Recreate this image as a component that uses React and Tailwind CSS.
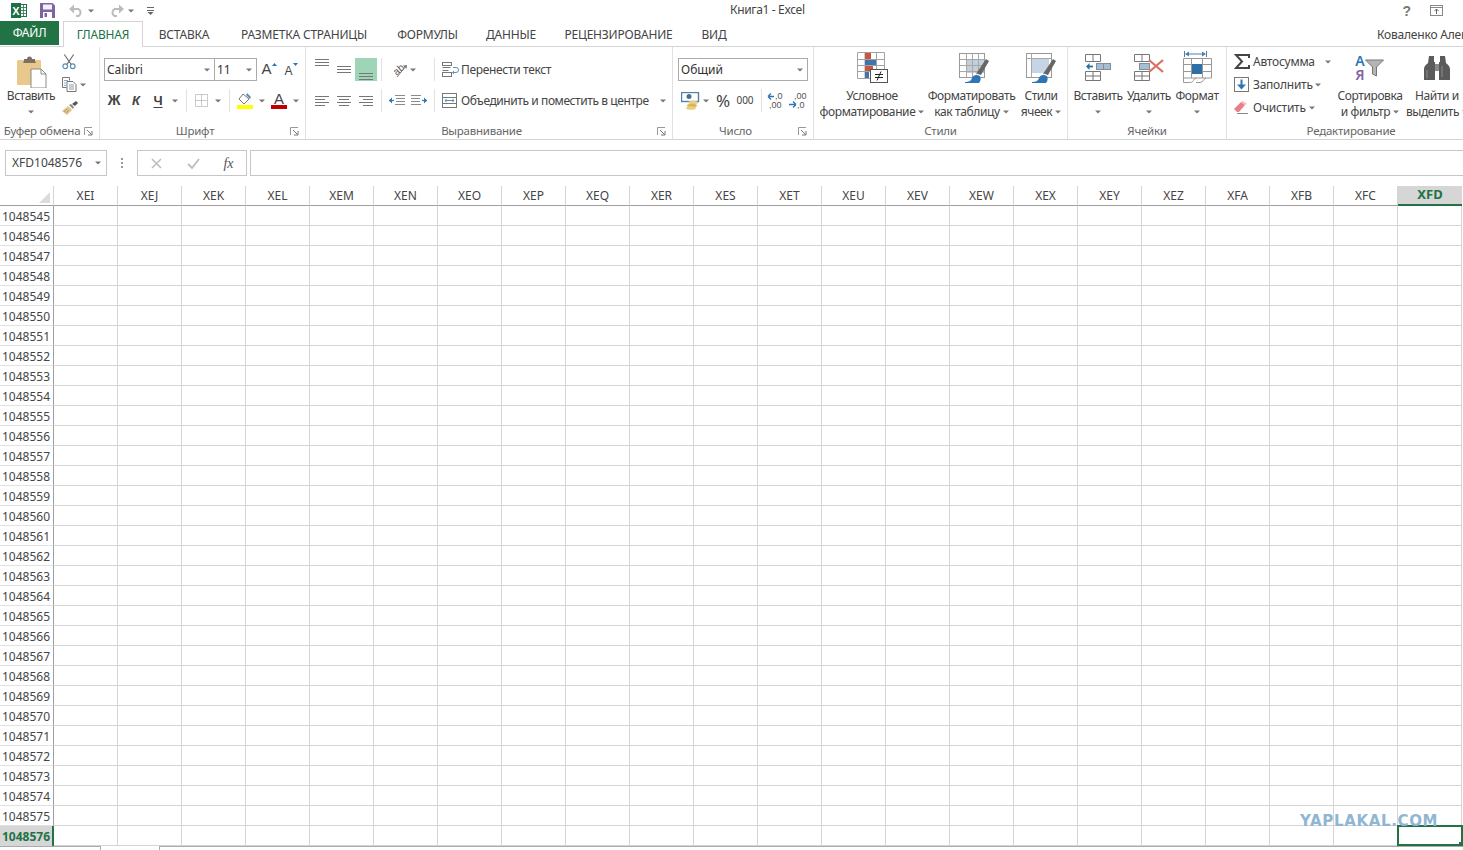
import React from 'react';

const COLS = ['XEI','XEJ','XEK','XEL','XEM','XEN','XEO','XEP','XEQ','XER','XES','XET','XEU','XEV','XEW','XEX','XEY','XEZ','XFA','XFB','XFC','XFD'];
const ROWS = Array.from({ length: 32 }, (_, i) => 1048545 + i);

const TABS = [
	{ label: 'ГЛАВНАЯ', cls: 'w-[80px] h-[26px] text-[#217346] bg-white border border-b-0 border-[#d4d4d4]' },
	{ label: 'ВСТАВКА', cls: 'w-[82px]' },
	{ label: 'РАЗМЕТКА СТРАНИЦЫ', cls: 'w-[158px]' },
	{ label: 'ФОРМУЛЫ', cls: 'w-[89px]' },
	{ label: 'ДАННЫЕ', cls: 'w-[78px]' },
	{ label: 'РЕЦЕНЗИРОВАНИЕ', cls: 'w-[137px]' },
	{ label: 'ВИД', cls: 'w-[54px]' },
];

const Caret = ({ className = '' }) => (
	<svg width="6" height="4" viewBox="0 0 6 4" className={className}>
		<path d="M0 0.5h6L3 3.5z" fill="#777" />
	</svg>
);

const Launcher = () => (
	<span className="w-[15px] flex justify-start">
		<svg width="9" height="9" viewBox="0 0 9 9">
			<path d="M.5 8V.5H8" fill="none" stroke="#999" />
			<path d="M3 3l4.5 4.5M4 8h4V4" fill="none" stroke="#777" />
		</svg>
	</span>
);

const Sep = ({ className = '' }) => <span className={'w-px h-[23px] bg-[#e1e1e1] ' + className} />;

const Tool = ({ w = 'w-[22px]', children, className = '' }) => (
	<span className={w + ' h-[23px] flex items-center justify-center shrink-0 ' + className}>{children}</span>
);

const CaretTool = ({ w = 'w-[12px]' }) => (
	<span className={w + ' h-[23px] flex items-center justify-center shrink-0'}><Caret /></span>
);

const Group = ({ w, label, launcher, border = true, children }) => (
	<div className={w + ' h-[92px] shrink-0 flex flex-col ' + (border ? 'border-r border-[#e1e1e1]' : '')}>
		<div className="h-[77px]">{children}</div>
		<div className="h-[14px] flex items-center text-[11.5px] tracking-[-0.25px] text-[#666]">
			<span className="flex-1 text-center whitespace-nowrap">{label}</span>
			{launcher && <Launcher />}
		</div>
	</div>
);

const BigBtn = ({ w, icon, lines, caretLine }) => (
	<div className={w + ' flex flex-col items-center shrink-0'}>
		<div className="h-[41px] flex items-center justify-center">{icon}</div>
		<div className="text-[12px] leading-[16px] tracking-[-0.4px] text-[#444] text-center whitespace-nowrap">
			<div>{lines[0]}</div>
			{caretLine ? (
				<div className="flex items-center justify-center gap-[3px]">{lines[1]}<Caret /></div>
			) : (
				<div className="h-[16px] flex items-center justify-center"><Caret /></div>
			)}
		</div>
	</div>
);

const Select = ({ w, text }) => (
	<div className={w + ' h-[23px] shrink-0 border border-[#ababab] flex items-center justify-between pl-[2px] pr-[4px] text-[12px] text-[#333]'}>
		<span>{text}</span>
		<Caret />
	</div>
);

const AlignLines = ({ rows }) => (
	<svg width="16" height="14" viewBox="0 0 16 14">
		{rows.map(([x1, x2, y], i) => <path key={i} d={`M${x1} ${y}.5H${x2}`} stroke="#777" />)}
	</svg>
);

const ExcelLogo = () => (
	<svg width="16" height="15" viewBox="0 0 16 15">
		<rect x="9.500" y="1.500" width="6" height="12" fill="#fff" stroke="#217346" />
		<path d="M12.500 1.500v12M9.500 4.500h6M9.500 7.500h6M9.500 10.500h6" stroke="#217346" strokeWidth=".8" />
		<rect x="0" y="0" width="10" height="15" fill="#1e7145" />
		<text x="5" y="12" textAnchor="middle" fontSize="11" fontWeight="700" fill="#fff" fontFamily="Liberation Sans">X</text>
	</svg>
);

const SaveIcon = () => (
	<svg width="15" height="15" viewBox="0 0 15 15">
		<path d="M0 0h12.500L15 2.500V15H0z" fill="#8064a2" />
		<rect x="3" y="1.500" width="9" height="5" fill="#f3eff7" />
		<rect x="3" y="9" width="9" height="6" fill="#fff" />
		<rect x="4.500" y="10" width="2.500" height="4" fill="#8064a2" />
	</svg>
);

const UndoIcon = ({ flip }) => (
	<svg width="15" height="13" viewBox="0 0 15 13" className={flip ? '-scale-x-100' : ''}>
		<path d="M3 5h6.500a4 4 0 0 1 0 7H7" fill="none" stroke="#bcbcbc" strokeWidth="2" />
		<path d="M0 5l5-4.500v9z" fill="#bcbcbc" />
	</svg>
);

const QatMore = () => (
	<svg width="7" height="8" viewBox="0 0 7 8">
		<path d="M0 .5h7M0 3.500h7" stroke="#666" />
		<path d="M.5 5h6L3.500 8z" fill="#666" />
	</svg>
);

const HelpIcon = () => <span className="text-[14px] font-bold text-[#777] leading-none font-['Liberation_Sans',sans-serif]">?</span>;

const RibbonDisplay = () => (
	<svg width="13" height="11" viewBox="0 0 13 11">
		<rect x=".5" y=".5" width="12" height="10" fill="none" stroke="#888" />
		<path d="M1 2.500h11" stroke="#888" />
		<path d="M6.500 9V4M4.500 6l2-2 2 2" fill="none" stroke="#666" />
	</svg>
);

const PasteIcon = () => (
	<svg width="30" height="32" viewBox="0 0 30 32">
		<rect x="0" y="4" width="24" height="25" rx="1" fill="#e8c88c" />
		<path d="M7 5V3h3a2.500 2.500 0 0 1 5 0h3v2l1 2H6z" fill="#7d6f63" />
		<path d="M14 13h10l5 5v14H14z" fill="#fff" stroke="#8a8a8a" />
		<path d="M24 13v5h5" fill="none" stroke="#8a8a8a" />
	</svg>
);

const ScissorsIcon = () => (
	<svg width="15" height="16" viewBox="0 0 15 16">
		<path d="M2.500 0l7.500 11M12.500 0L5 11" stroke="#666" strokeWidth="1.200" fill="none" />
		<circle cx="3.500" cy="12.500" r="2.500" fill="none" stroke="#5f8fb4" strokeWidth="1.300" />
		<circle cx="11.500" cy="12.500" r="2.500" fill="none" stroke="#5f8fb4" strokeWidth="1.300" />
	</svg>
);

const CopyIcon = () => (
	<svg width="15" height="15" viewBox="0 0 15 15">
		<path d="M.5.5h7v3M.5.500v10h4" fill="none" stroke="#777" />
		<path d="M2 3.500h4M2 6h2M2 8.500h2" stroke="#8aa9c2" />
		<path d="M5 4.500h6l3 3v7H5z" fill="#fff" stroke="#777" />
		<path d="M7 8h5M7 10h5M7 12h5" stroke="#9a9a9a" />
	</svg>
);

const PainterIcon = () => (
	<svg width="16" height="14" viewBox="0 0 16 14">
		<path d="M0 10l6-5 4 4-5 5z" fill="#e0c58f" />
		<path d="M2 11l3-3M4 12l3-3" stroke="#b59a64" />
		<path d="M7 4l2-1 3 3-1 2z" fill="#8a8a8a" />
		<path d="M10 3l4-3 2 2-3 3z" fill="#555" />
	</svg>
);

const BordersIcon = () => (
	<svg width="13" height="13" viewBox="0 0 13 13">
		<path d="M.5.5h12v12H.5zM6.500.5v12M.5 6.500h12" fill="none" stroke="#999" strokeDasharray="1 1" />
	</svg>
);

const FillIcon = () => (
	<svg width="16" height="17" viewBox="0 0 16 17">
		<path d="M6 2l6 5-5 5-5-5z" fill="#fff" stroke="#777" />
		<path d="M10 1l4 4-1 2-4-4z" fill="#5f8fb4" />
		<rect x="0" y="13" width="16" height="4" fill="#ffff00" />
	</svg>
);

const ColorIcon = () => (
	<div className="flex flex-col items-center w-[16px]">
		<span className="text-[15px] leading-[13px] font-['Liberation_Sans',sans-serif] text-[#444]">A</span>
		<span className="w-[16px] h-[4px] bg-[#c00000]" />
	</div>
);

const WrapIcon = () => (
	<svg width="17" height="15" viewBox="0 0 17 15">
		<rect x=".5" y=".5" width="9" height="3" fill="none" stroke="#777" />
		<path d="M.5 5.500h8M.5 8.500h6" stroke="#777" />
		<rect x=".5" y="10.500" width="9" height="4" fill="none" stroke="#777" />
		<path d="M11 5.500h3a2 2 0 0 1 0 5h-3" fill="none" stroke="#5f8fb4" />
		<path d="M10 10.500l2-2v4z" fill="#5f8fb4" />
	</svg>
);

const MergeIcon = () => (
	<svg width="15" height="15" viewBox="0 0 15 15">
		<rect x=".5" y=".5" width="14" height="14" fill="none" stroke="#777" />
		<path d="M.5 4.500h14M.5 10.500h14" stroke="#777" />
		<path d="M3 7.500h9" stroke="#5f8fb4" />
		<path d="M2.500 7.500l2-2v4zM12.500 7.500l-2-2v4z" fill="#5f8fb4" />
	</svg>
);

const OrientIcon = () => (
	<svg width="18" height="16" viewBox="0 0 18 16" className="overflow-visible">
		<text x="2" y="12" fontSize="10" fill="#555" transform="rotate(-40 6 8)" fontFamily="Liberation Sans">ab</text>
		<path d="M6 15L15 4" stroke="#777" />
		<path d="M16 3l-4 .5 3.500 3.500z" fill="#777" />
	</svg>
);

const IndentIcon = ({ rev }) => (
	<svg width="16" height="11" viewBox="0 0 16 11" className={rev ? '-scale-x-100' : ''}>
		<path d="M6 .5h10M7 3.500h9M7 6.500h9M6 9.500h10" stroke="#8a8a8a" />
		<path d="M0 5.500h5" stroke="#2e75b6" strokeWidth="1.200" />
		<path d="M0 5.500l3-3v6z" fill="#2e75b6" />
	</svg>
);

const CurrencyIcon = () => (
	<svg width="19" height="18" viewBox="0 0 19 18">
		<rect x=".5" y=".5" width="17" height="9" fill="#fff" stroke="#4f81a8" strokeWidth="1.400" />
		<circle cx="8" cy="4.500" r="2.500" fill="#4f6f8c" />
		<ellipse cx="12" cy="10.500" rx="5" ry="1.800" fill="#e6cf84" />
		<ellipse cx="11" cy="13.500" rx="5" ry="1.800" fill="#d8b64e" />
		<ellipse cx="10" cy="16" rx="5" ry="1.800" fill="#e6cf84" />
	</svg>
);

const DecimalIcon = ({ more }) => (
	<svg width="17" height="17" viewBox="0 0 17 17" className="overflow-visible">
		<text x={more ? 8 : 5} y="7" fontSize="9" fill="#555" fontFamily="Liberation Sans">{more ? ',0' : ',00'}</text>
		<text x={more ? 2 : 8} y="16" fontSize="9" fill="#555" fontFamily="Liberation Sans">{more ? ',00' : ',0'}</text>
		<path d={more ? 'M1 4.500h6M1 4.500l3-3M1 4.500l3 3' : 'M0 12.500h7M7 12.500l-3-3M7 12.500l-3 3'} fill="none" stroke="#2e75b6" strokeWidth="1.300" />
	</svg>
);

const CondIcon = () => (
	<svg width="31" height="31" viewBox="0 0 31 31">
		<path d="M.5 .5h27v26H.5zM.5 7.500h27M.5 13.500h27M.5 19.500h27M8 .5v26M19.500.5v26" fill="none" stroke="#a3a3a3" />
		<rect x="8" y="1" width="6" height="6" fill="#c8573e" />
		<rect x="8" y="8" width="11" height="5" fill="#3f74ad" />
		<rect x="8" y="14" width="8" height="5" fill="#c8573e" />
		<rect x="8" y="20" width="4" height="6" fill="#3f74ad" />
		<rect x="13.500" y="17.500" width="17" height="13" fill="#fff" stroke="#555" />
		<path d="M18 22.500h8M18 25.500h8M24 19.500l-4 9" stroke="#222" />
	</svg>
);

const BrushOverlay = () => (
	<>
		<path d="M6 29c4 0 6-1 7-4s5-4 8-2c1 2 1 5-1 7H6z" fill="#2e75b6" />
		<path d="M17 21L27 6l3 2-8 14z" fill="#666" />
		<path d="M18 21l4 2" stroke="#fff" />
	</>
);

const TableIcon = () => (
	<svg width="31" height="30" viewBox="0 0 31 30">
		<rect x=".5" y=".5" width="25" height="24" fill="#fff" stroke="#999" />
		<rect x="7" y="6" width="18" height="14" fill="#c3ced9" />
		<path d="M.5 6.500h25M.5 12.500h25M.5 18.500h25M7.500.5v24M13.500.5v24M19.500.5v24" fill="none" stroke="#a8a8a8" />
		<BrushOverlay />
	</svg>
);

const StylesIcon = () => (
	<svg width="31" height="30" viewBox="0 0 31 30">
		<rect x=".5" y=".5" width="25" height="24" fill="#fff" stroke="#999" />
		<rect x="5" y="5" width="18" height="15" fill="#c5d5e6" />
		<path d="M.5 5.500h25M5.500.5v24" fill="none" stroke="#a8a8a8" />
		<BrushOverlay />
	</svg>
);

const InsertCellIcon = () => (
	<svg width="26" height="27" viewBox="0 0 26 27">
		<path d="M.5 .5h15v7H.5zM8 .5v7" fill="none" stroke="#777" />
		<rect x="11.500" y="9.500" width="14" height="6" fill="#a9bdd0" stroke="#7f8f9f" />
		<path d="M18.500 9.500v6" stroke="#7f8f9f" />
		<path d="M3 12.500h5" stroke="#2e6f9e" strokeWidth="1.800" />
		<path d="M1 12.500l3.500-3.500v7z" fill="#2e6f9e" />
		<path d="M.5 17.500h15v9H.5zM8 17.500v9M.5 22h15" fill="none" stroke="#777" />
	</svg>
);

const DeleteCellIcon = () => (
	<svg width="30" height="27" viewBox="0 0 30 27">
		<path d="M.5 .5h15v7H.5zM8 .5v7" fill="none" stroke="#777" />
		<rect x="5.500" y="9.500" width="10" height="6" fill="#a9bdd0" stroke="#7f8f9f" />
		<path d="M.5 17.500h15v9H.5zM8 17.500v9M.5 22h15" fill="none" stroke="#777" />
		<path d="M15 6l14 12M29 6L15 18" stroke="#d9705f" strokeWidth="2.200" />
	</svg>
);

const FormatCellIcon = () => (
	<svg width="29" height="33" viewBox="0 0 29 33">
		<path d="M1.500 0v6M23.500 0v6M3 3h19" fill="none" stroke="#4f81a8" />
		<path d="M2 3l4-2.500v5zM23 3l-4-2.500v5z" fill="#4f81a8" />
		<path d="M.5 7.500h28V27H.5zM.5 13.500h28M.5 20.500h28M8.500 7.500V27M19.500 7.500V27" fill="none" stroke="#999" />
		<path d="M.5 27v4.500h7c3 0 3-4 6-4.500M13 31.500h4c3 0 3-3 6-4.500" fill="none" stroke="#999" />
		<rect x="9" y="13" width="10" height="10" fill="#2e6fa8" />
	</svg>
);

const SumIcon = () => (
	<svg width="16" height="15" viewBox="0 0 16 15">
		<path d="M15 4V1H2l6 6.500L2 14h13v-3" fill="none" stroke="#444" strokeWidth="2" />
	</svg>
);

const FillDown = () => (
	<svg width="15" height="15" viewBox="0 0 15 15">
		<rect x=".5" y=".5" width="14" height="14" fill="#fff" stroke="#777" />
		<path d="M7.500 2.500V8" stroke="#2e75b6" strokeWidth="2" />
		<path d="M3 7.500h9L7.500 12.500z" fill="#2e75b6" />
	</svg>
);

const Eraser = () => (
	<svg width="15" height="13" viewBox="0 0 15 13">
		<path d="M0 8l7-7 4 3-6 7H3z" fill="#e8808c" />
		<path d="M7 1l1.500-1L13 3l-2 1z" fill="#f4b6bd" />
		<path d="M3 12.500h11" stroke="#888" />
	</svg>
);

const SortIcon = () => (
	<div className="flex items-center h-[34px] -ml-px">
		<div className="flex flex-col items-center gap-px text-[14px] leading-[13px] font-semibold font-['Noto_Sans',sans-serif]">
			<span className="text-[#2e75b6]">А</span>
			<span className="text-[#8064a2]">Я</span>
		</div>
		<svg width="19" height="18" viewBox="0 0 19 18">
			<path d="M.5 1h18l-7 7v9l-4-2V8z" fill="#b5b5b5" stroke="#777" />
		</svg>
	</div>
);

const Binoculars = () => (
	<svg width="26" height="24" viewBox="0 0 26 24">
		<path d="M5 0h5v6h1v18H0V13c0-3 3-5 4-6z" fill="#5b5b5b" />
		<path d="M21 0h-5v6h-1v18h11V13c0-3-3-5-4-6z" fill="#5b5b5b" />
		<rect x="11" y="8" width="4" height="7" fill="#8a8a8a" />
		<path d="M3 14v8M18 10v11" stroke="#8d8d8d" />
	</svg>
);

const Ribbon = () => (
	<div className="h-[93px] flex border-b border-[#d4d4d4] overflow-hidden text-[#444]">
		<Group w="w-[100px]" label="Буфер обмена" launcher>
			<div className="flex pl-[7px]">
				<div className="w-[48px] flex flex-col items-center shrink-0">
					<div className="h-[41px] flex items-end ml-[2px]"><PasteIcon /></div>
					<div className="text-[12px] leading-[16px] tracking-[-0.5px]">Вставить</div>
					<div className="h-[16px] flex items-center"><Caret /></div>
				</div>
				<div className="pt-[3px] pl-[7px]">
					<Tool w="w-[14px]"><ScissorsIcon /></Tool>
					<div className="flex items-center h-[23px]">
						<CopyIcon />
						<Caret className="ml-[3px]" />
					</div>
					<Tool w="w-[16px]"><PainterIcon /></Tool>
				</div>
			</div>
		</Group>

		<Group w="w-[206px]" label="Шрифт" launcher>
			<div className="pt-[11px] pl-[4px] flex items-center">
				<Select w="w-[111px]" text="Calibri" />
				<Select w="w-[43px] -ml-px" text="11" />
				<Tool w="w-[22px] ml-px">
					<span className="text-[15px] font-['Liberation_Sans',sans-serif]">A</span>
					<svg width="5" height="3" viewBox="0 0 5 3" className="mb-[10px]"><path d="M0 3h5L2.500 0z" fill="#2e75b6" /></svg>
				</Tool>
				<Tool>
					<span className="text-[12px] font-['Liberation_Sans',sans-serif] mt-[2px]">A</span>
					<svg width="5" height="3" viewBox="0 0 5 3" className="mb-[10px]"><path d="M0 0h5L2.500 3z" fill="#2e75b6" /></svg>
				</Tool>
			</div>
			<div className="mt-[8px] pl-[3px] flex items-center">
				<Tool><b className="text-[14px] font-['Liberation_Sans',sans-serif]">Ж</b></Tool>
				<Tool><b className="text-[13px] italic font-['Liberation_Sans',sans-serif]">К</b></Tool>
				<Tool><b className="text-[13px] underline underline-offset-2 font-['Liberation_Sans',sans-serif]">Ч</b></Tool>
				<CaretTool />
				<Sep className="ml-[5px]" />
				<Tool className="ml-[3px]"><BordersIcon /></Tool>
				<CaretTool />
				<Sep className="ml-[5px]" />
				<Tool className="ml-[4px]"><FillIcon /></Tool>
				<CaretTool w="w-[11px]" />
				<Tool className="ml-px"><ColorIcon /></Tool>
				<CaretTool w="w-[11px]" />
			</div>
		</Group>

		<Group w="w-[367px]" label="Выравнивание" launcher>
			<div className="pt-[11px] pl-[5px] flex items-center">
				<Tool className="pb-[10px]"><AlignLines rows={[[1, 15, 1], [1, 15, 4], [1, 15, 7]]} /></Tool>
				<Tool><AlignLines rows={[[1, 15, 3], [1, 15, 6], [1, 15, 9]]} /></Tool>
				<Tool className="bg-[#9fd5b7]"><span className="mt-[8px]"><AlignLines rows={[[1, 15, 6], [1, 15, 9], [1, 15, 12]]} /></span></Tool>
				<Sep className="ml-[4px]" />
				<div className="w-[52px] flex items-center pl-[9px] gap-[1px]">
					<OrientIcon />
					<Caret />
				</div>
				<Sep />
				<div className="ml-[7px] flex items-center gap-[2px] text-[12px] tracking-[-0.33px] whitespace-nowrap">
					<WrapIcon />
					<span>Перенести текст</span>
				</div>
			</div>
			<div className="mt-[8px] pl-[5px] flex items-center">
				<Tool><AlignLines rows={[[1, 15, 2], [1, 11, 5], [1, 15, 8], [1, 11, 11]]} /></Tool>
				<Tool><AlignLines rows={[[1, 15, 2], [3, 13, 5], [1, 15, 8], [3, 13, 11]]} /></Tool>
				<Tool><AlignLines rows={[[1, 15, 2], [5, 15, 5], [1, 15, 8], [5, 15, 11]]} /></Tool>
				<Sep className="ml-[4px]" />
				<Tool className="ml-[4px]"><IndentIcon /></Tool>
				<Tool><IndentIcon rev /></Tool>
				<Sep className="ml-[4px]" />
				<div className="ml-[7px] flex items-center gap-[3px] text-[12px] tracking-[-0.42px] whitespace-nowrap">
					<MergeIcon />
					<span className="ml-px w-[196px]">Объединить и поместить в центре</span>
					<Caret />
				</div>
			</div>
		</Group>

		<Group w="w-[141px]" label="Число" launcher>
			<div className="pt-[11px] pl-[5px]">
				<Select w="w-[130px]" text="Общий" />
			</div>
			<div className="mt-[8px] pl-[7px] flex items-center">
				<div className="w-[32px] h-[23px] flex items-center gap-[3px] shrink-0 pl-px">
					<CurrencyIcon />
					<Caret />
				</div>
				<Tool><span className="text-[17px]">%</span></Tool>
				<Tool><span className="text-[10px]">000</span></Tool>
				<Sep className="ml-[5px]" />
				<Tool className="ml-[2px]"><DecimalIcon more /></Tool>
				<Tool><DecimalIcon /></Tool>
			</div>
		</Group>

		<Group w="w-[254px]" label="Стили">
			<div className="flex pl-[4px]">
				<BigBtn w="w-[108px]" icon={<CondIcon />} lines={['Условное', 'форматирование']} caretLine />
				<BigBtn w="w-[91px]" icon={<span className="ml-[6px]"><TableIcon /></span>} lines={['Форматировать', 'как таблицу']} caretLine />
				<BigBtn w="w-[48px]" icon={<StylesIcon />} lines={['Стили', 'ячеек']} caretLine />
			</div>
		</Group>

		<Group w="w-[159px]" label="Ячейки">
			<div className="flex pl-[4px]">
				<BigBtn w="w-[52px]" icon={<InsertCellIcon />} lines={['Вставить']} />
				<BigBtn w="w-[50px]" icon={<DeleteCellIcon />} lines={['Удалить']} />
				<BigBtn w="w-[46px]" icon={<FormatCellIcon />} lines={['Формат']} />
			</div>
		</Group>

		<Group w="w-[248px]" label="Редактирование" border={false}>
			<div className="flex pl-[7px]">
				<div className="w-[101px] pt-[3px] shrink-0 text-[12px] tracking-[-0.25px]">
					<div className="h-[23px] flex items-center">
						<span className="w-[19px]"><SumIcon /></span>
						<span className="w-[72px]">Автосумма</span>
						<Caret />
					</div>
					<div className="h-[23px] flex items-center">
						<span className="w-[19px]"><FillDown /></span>
						<span className="w-[62px]">Заполнить</span>
						<Caret />
					</div>
					<div className="h-[23px] flex items-center">
						<span className="w-[19px]"><Eraser /></span>
						<span className="w-[56px]">Очистить</span>
						<Caret />
					</div>
				</div>
				<BigBtn w="w-[70px]" icon={<SortIcon />} lines={['Сортировка', 'и фильтр']} caretLine />
				<BigBtn w="w-[64px]" icon={<Binoculars />} lines={['Найти и', 'выделить']} caretLine />
			</div>
		</Group>
	</div>
);

const FormulaBar = () => (
	<div className="h-[26px] mt-[10px] flex text-[#444]">
		<div className="ml-[5px] w-[102px] shrink-0 border border-[#c6c6c6] flex items-center justify-between pl-[6px] pr-[5px] text-[12px]">
			<span>XFD1048576</span>
			<Caret />
		</div>
		<div className="w-[30px] shrink-0 flex flex-col items-center justify-center gap-[2px]">
			<span className="w-[2px] h-[2px] bg-[#999]" />
			<span className="w-[2px] h-[2px] bg-[#999]" />
			<span className="w-[2px] h-[2px] bg-[#999]" />
		</div>
		<div className="w-[110px] shrink-0 border border-[#c6c6c6] flex items-center">
			<span className="w-[37px] flex justify-center">
				<svg width="11" height="11" viewBox="0 0 11 11"><path d="M1 1l9 9M10 1l-9 9" stroke="#bdbdbd" strokeWidth="1.500" /></svg>
			</span>
			<span className="w-[36px] flex justify-center">
				<svg width="13" height="11" viewBox="0 0 13 11"><path d="M1 6l4 4 7-9" fill="none" stroke="#bdbdbd" strokeWidth="1.800" /></svg>
			</span>
			<span className="w-[35px] text-center text-[14px] italic font-['Liberation_Serif',serif] text-[#555]">fx</span>
		</div>
		<div className="ml-[3px] flex-1 border border-r-0 border-[#c6c6c6]" />
	</div>
);

const Sheet = () => (
	<div className="mt-[10px] grid grid-cols-[54px_repeat(22,64px)] auto-rows-[20px] text-[12px] text-[#444]">
		<div className="h-[20px] border-b border-r border-b-[#9f9f9f] border-r-[#d4d4d4] flex items-end justify-end pr-[3px] pb-[2px]">
			<svg width="11" height="11" viewBox="0 0 11 11"><path d="M11 0v11H0z" fill="#dcdcdc" /></svg>
		</div>
		{COLS.map((c) => c === 'XFD' ? (
			<div key={c} className="bg-[#d6d6d6] border-b-2 border-[#217346] text-[#217346] font-bold text-[13px] flex items-center justify-center">{c}</div>
		) : (
			<div key={c} className="border-b border-r border-b-[#9f9f9f] border-r-[#d4d4d4] flex items-center justify-center">{c}</div>
		))}
		{ROWS.map((r) => {
			const last = r === 1048576;
			return (
				<React.Fragment key={r}>
					{last ? (
						<div className="bg-[#d6d6d6] border-r-2 border-[#217346] text-[#217346] font-bold flex items-center pl-[2px] pt-[1px]">{r}</div>
					) : (
						<div className="border-r border-b border-r-[#9f9f9f] border-b-[#e1e1e1] flex items-center pl-[2px] pt-[2px]">{r}</div>
					)}
					{COLS.map((c) => (
						<div key={c} className="relative border-r border-b border-[#d4d4d4]">
							{last && c === 'XFD' && (
								<div className="absolute -left-px -top-px w-[66px] h-[21px] border-2 border-[#217346]">
									<span className="absolute -right-[2px] -bottom-[2px] w-[4px] h-[4px] bg-[#217346]" />
								</div>
							)}
						</div>
					))}
				</React.Fragment>
			);
		})}
	</div>
);

export default function App() {
	return (
		<div className="relative w-[1463px] h-[850px] overflow-hidden bg-white font-['Noto_Sans',sans-serif]">
			<div className="h-[21px] flex items-center relative">
				<div className="flex items-center pl-[11px]">
					<ExcelLogo />
					<span className="ml-[13px]"><SaveIcon /></span>
					<span className="ml-[14px]"><UndoIcon /></span>
					<Caret className="ml-[4px]" />
					<span className="ml-[15px]"><UndoIcon flip /></span>
					<Caret className="ml-[4px]" />
					<span className="ml-[13px]"><QatMore /></span>
				</div>
				<span className="absolute left-[730px] top-[1px] text-[12px] tracking-[-0.35px] text-[#444] whitespace-nowrap">Книга1 - Excel</span>
				<div className="ml-auto flex items-center pr-[20px] gap-[19px]">
					<HelpIcon />
					<RibbonDisplay />
				</div>
			</div>
			<div className="h-[26px] flex items-end border-b border-[#d4d4d4] text-[12px] tracking-[-0.2px] text-[#444] relative">
				<div className="w-[59px] h-[24px] bg-[#217346] text-white flex items-center justify-center mb-px">ФАЙЛ</div>
				<div className="w-[4px]" />
				{TABS.map((t) => (
					<div key={t.label} className={t.cls + ' flex items-center justify-center h-[25px] shrink-0 -mb-px whitespace-nowrap'}>{t.label}</div>
				))}
				<span className="absolute left-[1377px] top-[5px] whitespace-nowrap">Коваленко Алек</span>
			</div>
			<Ribbon />
			<FormulaBar />
			<Sheet />
			<div className="h-[4px] border-t border-[#ababab] flex">
				<div className="ml-[100px] w-[60px] h-[4px] -mt-px bg-white border-x border-[#ababab]" />
			</div>
			<span className="absolute left-[1300px] top-[810px] text-[15px] font-bold tracking-[0.65px] text-[#8fb6d2] font-['DejaVu_Sans',sans-serif] whitespace-nowrap">YAPLAKAL.COM</span>
		</div>
	);
}
